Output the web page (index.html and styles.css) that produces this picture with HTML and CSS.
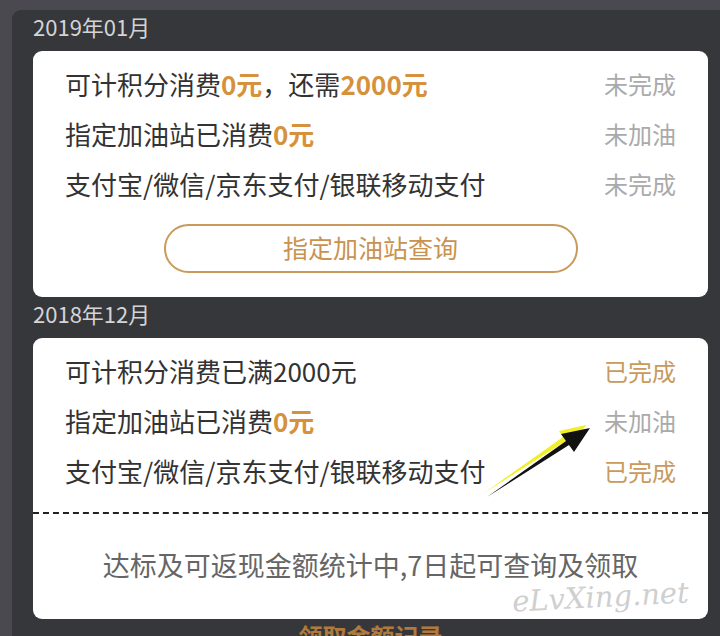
FILE: index.html
```html
<!DOCTYPE html>
<html lang="zh-CN">
<head>
    <meta charset="UTF-8">
    <meta name="viewport" content="width=device-width, initial-scale=1.0">
    <title>加油积分</title>
    <link rel="stylesheet" href="styles.css">
</head>
<body>

    <div class="panel">
        <div class="month">2019年01月</div>
        <div class="card">
            <div class="rows">
                <div class="row">
                    <span>可计积分消费<b>0元</b>，还需<b>2000元</b></span>
                    <span class="status">未完成</span>
                </div>
                <div class="row">
                    <span>指定加油站已消费<b>0元</b></span>
                    <span class="status">未加油</span>
                </div>
                <div class="row">
                    <span>支付宝/微信/京东支付/银联移动支付</span>
                    <span class="status">未完成</span>
                </div>
            </div>
            <div class="btn-wrap">
                <button type="button" class="query-btn">指定加油站查询</button>
            </div>
        </div>

        <div class="month">2018年12月</div>
        <div class="card">
            <div class="rows rows-top">
                <div class="row">
                    <span>可计积分消费已满2000元</span>
                    <span class="status done">已完成</span>
                </div>
                <div class="row">
                    <span>指定加油站已消费<b>0元</b></span>
                    <span class="status">未加油</span>
                </div>
                <div class="row">
                    <span>支付宝/微信/京东支付/银联移动支付</span>
                    <span class="status done">已完成</span>
                </div>
            </div>
            <div class="card-note">达标及可返现金额统计中,7日起可查询及领取</div>
        </div>

        <div class="more-link">领取金额记录</div>
    </div>

    <!-- annotation arrow drawn over the screenshot -->
    <svg class="arrow" width="720" height="636" viewBox="0 0 720 636">
        <polygon fill="#f2ee2a" points="484,493 566,441 570,447 586,425 559,431 563,437"/>
        <polygon fill="#111" points="487,497 569,445 574,452 590,428 561,434 566,441"/>
    </svg>

    <div class="watermark">eLvXing.net</div>

</body>
</html>
```

FILE: styles.css
```css
body {
    margin: 0;
    background: #4a4950;
    font-family: "Noto Sans CJK SC", "Noto Sans", sans-serif;
    height: 636px;
    overflow: hidden;
    position: relative;
}

.panel {
    margin: 10px 0 0 12px;
    padding: 0 12px 0 21px;
    background: #36373b;
    border-top-left-radius: 9px;
    min-height: 640px;
}

.month {
    height: 41px;
    line-height: 32px;
    font-size: 22px;
    color: #d4d4d6;
}

.card {
    background: #fff;
    border-radius: 9px;
}

.rows {
    padding: 7px 32px 4px 32px;
}

.rows-top {
    padding-bottom: 17px;
    border-bottom: 2px dashed #222;
}

.row {
    display: flex;
    justify-content: space-between;
    align-items: center;
    height: 50px;
    font-size: 26px;
    color: #333;
}

.row b {
    color: #d6913c;
}

.status {
    font-size: 24px;
    color: #aaa;
}

.status.done {
    color: #c99a5d;
}

.btn-wrap {
    display: flex;
    justify-content: center;
    padding: 12px 0 24px 0;
}

.query-btn {
    width: 414px;
    height: 49px;
    border: 2px solid #c99a5c;
    border-radius: 25px;
    background: #fff;
    color: #c9924f;
    font-family: inherit;
    font-size: 25px;
    padding: 0 0 3px 0;
}

.card-note {
    height: 105px;
    padding-bottom: 4px;
    box-sizing: border-box;
    display: flex;
    align-items: center;
    justify-content: center;
    font-size: 27px;
    color: #666;
}

.more-link {
    margin-top: 2px;
    text-align: center;
    font-size: 24px;
    line-height: 30px;
    font-weight: bold;
    color: #b07a3e;
}

.arrow {
    position: absolute;
    top: 0;
    left: 0;
    pointer-events: none;
}

.watermark {
    position: absolute;
    left: 512px;
    top: 580px;
    font-family: "DejaVu Serif", serif;
    font-style: italic;
    font-size: 29px;
    color: #cfcfcf;
    transform: rotate(-3deg);
    pointer-events: none;
}
```
